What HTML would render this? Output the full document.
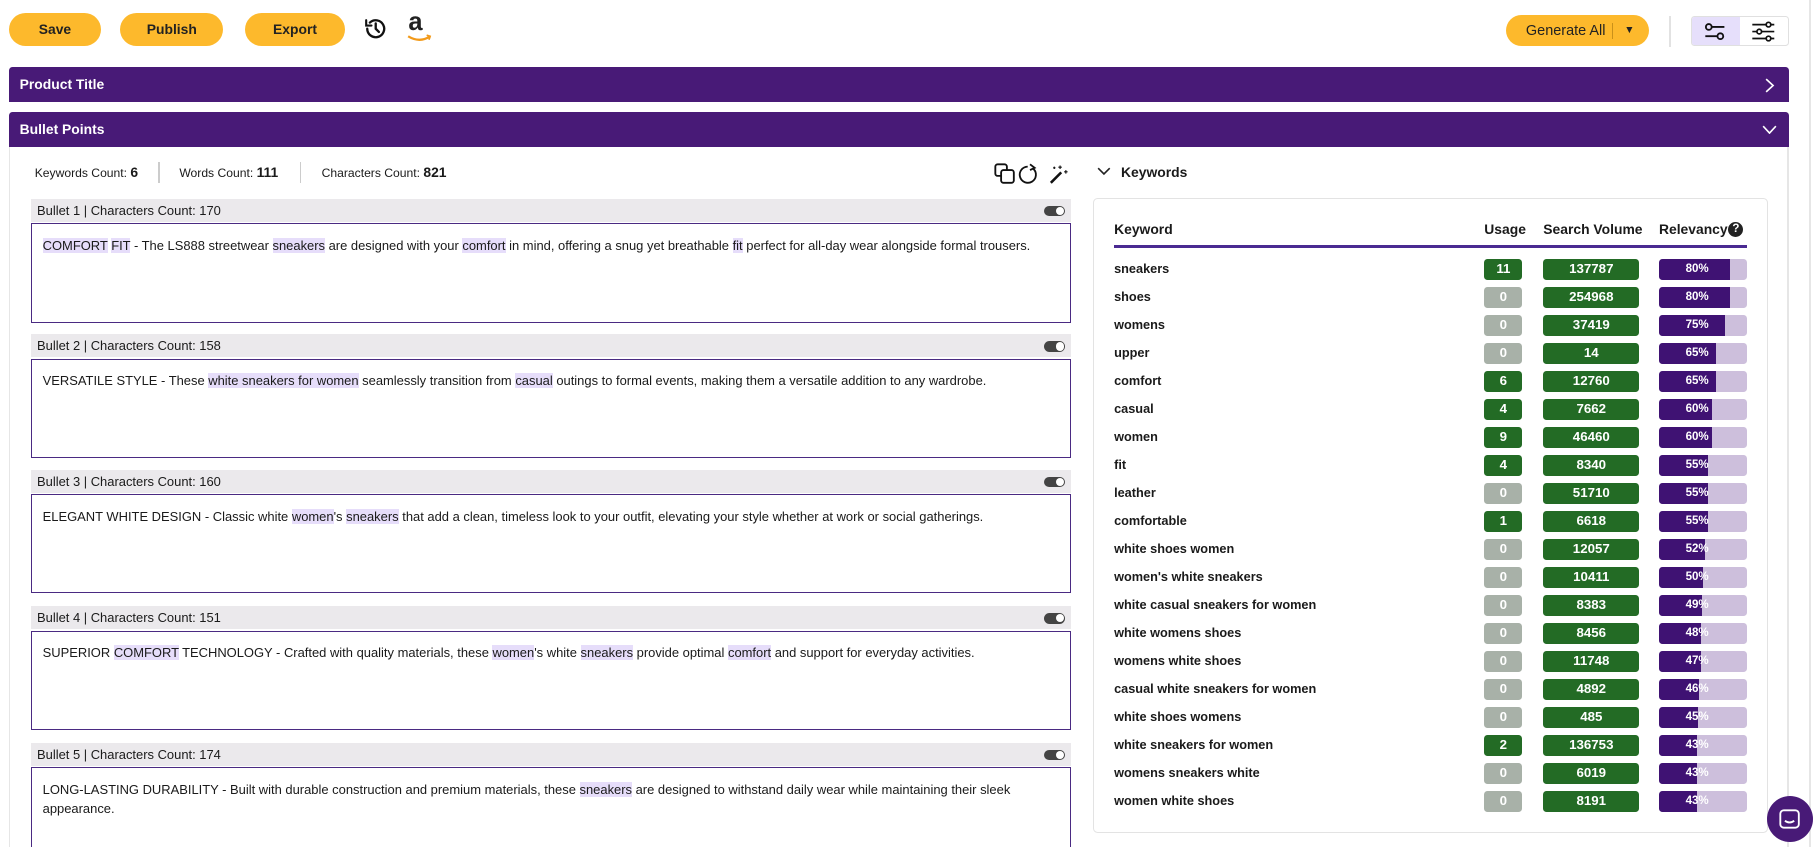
<!DOCTYPE html>
<html><head><meta charset="utf-8">
<style>
*{box-sizing:border-box;margin:0;padding:0}
html,body{width:1814px;height:847px;overflow:hidden;background:#fff}
#w{zoom:1.15689;width:1568px;height:732px;position:relative;font-family:"Liberation Sans",Arial,sans-serif;color:#1a1a1a;font-size:12px}
.a{position:absolute}
.btn{position:absolute;background:#fdb92c;border-radius:15px;height:29px;top:11px;font-size:12px;font-weight:bold;color:#222;display:flex;align-items:center;justify-content:center}
.bar{position:absolute;left:8px;width:1538px;height:30px;background:#481a77;color:#fff;font-weight:bold;font-size:12px;padding-left:9px;line-height:30px;border-radius:3px 3px 0 0}
.bh{position:absolute;left:27px;width:899px;height:20px;background:#ebe9ec;font-size:11.2px;line-height:20px;padding-left:5px}
.bh i{position:absolute;right:5px;top:6px;width:19px;height:9px;border-radius:5px;background:#444}
.bh i:after{content:"";position:absolute;right:1px;top:1px;width:7px;height:7px;border-radius:50%;background:#fff}
.bb{position:absolute;left:27px;width:899px;height:86px;border:1px solid #4a2a82;padding:10px 9px;font-size:11.2px;line-height:17px}
mark{background:#e6ddfa;color:inherit}
.row{position:absolute;left:963px;width:547px;height:18px;font-weight:bold;font-size:11px;line-height:18px}
.row .u{position:absolute;top:0;left:320px;width:33px;height:18px;border-radius:3px;color:#fff;text-align:center;font-size:11.5px}
.row .s{position:absolute;top:0;left:371px;width:83px;height:18px;border-radius:3px;background:#236b25;color:#fff;text-align:center;font-size:11.5px}
.row .r{position:absolute;top:0;left:471px;width:76px;height:18px;border-radius:3px;background:#cdbfdc;overflow:hidden;color:#fff;font-size:10px}
.row .r b{position:absolute;left:0;top:0;height:18px;background:#3f1273}
.row .r span{position:absolute;left:0;top:0;width:66px;text-align:center}
.g{background:#236b25}.z{background:#a8b1a8}
</style></head><body><div id="w">
<div class="btn" style="left:8px;width:79px">Save</div>
<div class="btn" style="left:104px;width:89px">Publish</div>
<div class="btn" style="left:212px;width:86px">Export</div>
<svg class="a" style="left:314px;top:14px" width="22" height="22" viewBox="0 0 24 24" fill="none" stroke="#111" stroke-width="2.2" stroke-linecap="round"><path d="M4 12a8 8 0 1 0 2.5-5.8"/><path d="M3 4v5h5" stroke-width="2"/><path d="M12 7v5l3 3"/></svg>
<div class="a" style="left:353px;top:7px;font-size:22px;font-weight:bold;color:#222">a</div>
<svg class="a" style="left:352px;top:29px" width="22" height="8" viewBox="0 0 22 8"><path d="M1 2q10 6 19 0" stroke="#f29a1a" stroke-width="2" fill="none"/><path d="M17 1l3 1-1 3" stroke="#f29a1a" stroke-width="1.5" fill="none"/></svg>
<div class="btn" style="left:1302px;width:123px;top:13px;height:27px;justify-content:flex-start;padding-left:17px;font-weight:normal;font-size:12.5px">Generate All<span style="position:absolute;left:91px;top:7px;width:1px;height:14px;background:#c9901a"></span><span style="position:absolute;left:102px;font-size:9px">▼</span></div>
<div class="a" style="left:1443px;top:14px;width:1px;height:27px;background:#e2e2e2"></div>
<div class="a" style="left:1462px;top:14px;width:84px;height:26px;border:1px solid #e0e0e0;border-radius:3px;overflow:hidden"><div style="width:41px;height:26px;background:#e6dffb"></div></div>
<svg class="a" style="left:1472px;top:17px" width="22" height="20" viewBox="0 0 22 20" fill="none" stroke="#111" stroke-width="1.6"><circle cx="5" cy="6" r="2.5"/><path d="M7.5 6h11"/><circle cx="15" cy="14" r="2.5"/><path d="M2 14h10.5"/></svg>
<svg class="a" style="left:1513px;top:17px" width="24" height="20" viewBox="0 0 24 20" fill="none" stroke="#111" stroke-width="1.5"><path d="M2 4h19M2 10h19M2 16h19"/><circle cx="16" cy="4" r="2" fill="#fff"/><circle cx="8" cy="10" r="2" fill="#fff"/><circle cx="16" cy="16" r="2" fill="#fff"/></svg>
<div class="a" style="left:1564px;top:0;width:1px;height:732px;background:#e6e6e6"></div>

<div class="bar" style="top:58px">Product Title<svg class="a" style="right:12px;top:9px" width="8" height="13" viewBox="0 0 8 13" fill="none" stroke="#fff" stroke-width="1.4"><path d="M1 1l6 5.5L1 12"/></svg></div>
<div class="bar" style="top:97px">Bullet Points<svg class="a" style="right:10px;top:11px" width="13" height="8" viewBox="0 0 13 8" fill="none" stroke="#fff" stroke-width="1.4"><path d="M1 1l5.5 6L12 1"/></svg></div>
<div class="a" style="left:8px;top:127px;width:1px;height:605px;background:#e6e6e6"></div>
<div class="a" style="left:1545px;top:127px;width:1px;height:605px;background:#e6e6e6"></div>

<div class="a" style="left:30px;top:142px;font-size:10.5px;line-height:14px">Keywords Count: <b style="font-size:12px">6</b></div>
<div class="a" style="left:137px;top:140px;width:1px;height:18px;background:#ccc"></div>
<div class="a" style="left:155px;top:142px;font-size:10.5px;line-height:14px">Words Count: <b style="font-size:12px">111</b></div>
<div class="a" style="left:259px;top:140px;width:1px;height:18px;background:#ccc"></div>
<div class="a" style="left:278px;top:142px;font-size:10.5px;line-height:14px">Characters Count: <b style="font-size:12px">821</b></div>
<svg class="a" style="left:858px;top:140px" width="68" height="20" viewBox="0 0 68 20" fill="none" stroke="#111" stroke-width="1.6"><rect x="2" y="2" width="10" height="10" rx="2"/><rect x="7" y="7" width="11" height="11" rx="2" fill="#fff"/><path d="M30 4a7 7 0 1 0 5 2" /><path d="M32 2l4 3-4 2"/><path d="M50 18l9-9" stroke-width="2.2"/><path d="M58 3v3M56.5 4.5h3M63 7v3M61.5 8.5h3M53 4v2M52 5h2" stroke-width="1"/></svg>

<div class="bh" style="top:172px">Bullet 1 | Characters Count: 170<i></i></div>
<div class="bb" style="top:193px"><mark>COMFORT</mark> <mark>FIT</mark> - The LS888 streetwear <mark>sneakers</mark> are designed with your <mark>comfort</mark> in mind, offering a snug yet breathable <mark>fit</mark> perfect for all-day wear alongside formal trousers.</div>
<div class="bh" style="top:289px">Bullet 2 | Characters Count: 158<i></i></div>
<div class="bb" style="top:310px">VERSATILE STYLE - These <mark>white sneakers for women</mark> seamlessly transition from <mark>casual</mark> outings to formal events, making them a versatile addition to any wardrobe.</div>
<div class="bh" style="top:406px">Bullet 3 | Characters Count: 160<i></i></div>
<div class="bb" style="top:427px">ELEGANT WHITE DESIGN - Classic white <mark>women</mark>'s <mark>sneakers</mark> that add a clean, timeless look to your outfit, elevating your style whether at work or social gatherings.</div>
<div class="bh" style="top:524px">Bullet 4 | Characters Count: 151<i></i></div>
<div class="bb" style="top:545px">SUPERIOR <mark>COMFORT</mark> TECHNOLOGY - Crafted with quality materials, these <mark>women</mark>'s white <mark>sneakers</mark> provide optimal <mark>comfort</mark> and support for everyday activities.</div>
<div class="bh" style="top:642px">Bullet 5 | Characters Count: 174<i></i></div>
<div class="bb" style="top:663px;height:80px">LONG-LASTING DURABILITY - Built with durable construction and premium materials, these <mark>sneakers</mark> are designed to withstand daily wear while maintaining their sleek appearance.</div>

<svg class="a" style="left:948px;top:144px" width="12" height="8" viewBox="0 0 12 8" fill="none" stroke="#222" stroke-width="1.4"><path d="M1 1l5 5 5-5"/></svg>
<div class="a" style="left:969px;top:142px;font-weight:bold;font-size:12px">Keywords</div>
<div class="a" style="left:945px;top:171px;width:583px;height:549px;border:1px solid #e3e3e3;border-radius:4px"></div>
<div class="a" style="left:963px;top:191px;font-weight:bold;font-size:12px">Keyword</div>
<div class="a" style="left:1283px;top:191px;font-weight:bold;font-size:12px">Usage</div>
<div class="a" style="left:1334px;top:191px;font-weight:bold;font-size:12px">Search Volume</div>
<div class="a" style="left:1434px;top:191px;font-weight:bold;font-size:12px">Relevancy</div>
<div class="a" style="left:1494px;top:192px;width:13px;height:13px;border-radius:50%;background:#222;color:#fff;font-size:10px;font-weight:bold;text-align:center;line-height:13px">?</div>
<div class="a" style="left:963px;top:212px;width:547px;height:2px;background:#4a2a92"></div>
<div id="rows"></div>
<div class="a" style="left:1527px;top:688px;width:40px;height:40px;border-radius:50%;background:#481a77"></div>
<svg class="a" style="left:1537px;top:698px" width="20" height="20" viewBox="0 0 20 20" fill="none" stroke="#fff" stroke-width="1.6"><rect x="2" y="2" width="16" height="15" rx="3"/><path d="M6 11q4 3 8 0"/></svg>
<script>
var d=[["sneakers",11,137787,80],["shoes",0,254968,80],["womens",0,37419,75],["upper",0,14,65],["comfort",6,12760,65],["casual",4,7662,60],["women",9,46460,60],["fit",4,8340,55],["leather",0,51710,55],["comfortable",1,6618,55],["white shoes women",0,12057,52],["women's white sneakers",0,10411,50],["white casual sneakers for women",0,8383,49],["white womens shoes",0,8456,48],["womens white shoes",0,11748,47],["casual white sneakers for women",0,4892,46],["white shoes womens",0,485,45],["white sneakers for women",2,136753,43],["womens sneakers white",0,6019,43],["women white shoes",0,8191,43]];
var h="";d.forEach(function(r,i){var t=224+i*24.2;h+='<div class="row" style="top:'+t+'px">'+r[0]+'<div class="u '+(r[1]?'g':'z')+'">'+r[1]+'</div><div class="s">'+r[2]+'</div><div class="r"><b style="width:'+Math.round(r[3]*0.76)+'px"></b><span>'+r[3]+'%</span></div></div>'});
document.getElementById("rows").outerHTML=h;
</script>
</div></body></html>
